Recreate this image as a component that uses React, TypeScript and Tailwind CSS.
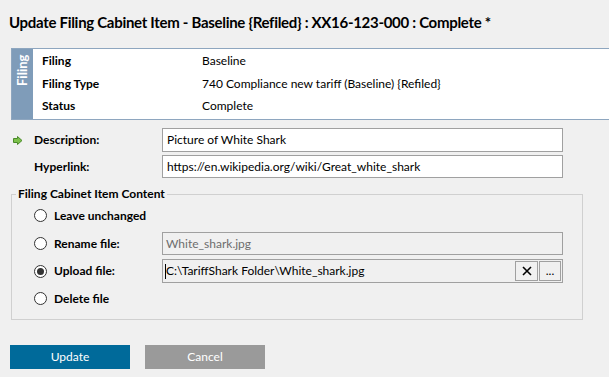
import React from "react";

const font = { fontFamily: 'Lato, "Noto Sans", sans-serif' };

function Radio({ checked }: { checked?: boolean }) {
  return (
    <span className="w-[13px] h-[13px] rounded-full border border-[#333] bg-white flex items-center justify-center shrink-0">
      {checked && <span className="w-[7px] h-[7px] rounded-full bg-[#333]" />}
    </span>
  );
}

function Arrow() {
  return (
    <svg width="10" height="9" viewBox="0 0 10 9">
      <path d="M0.5 2.5 H4.5 V0.5 L9 4.5 L4.5 8.5 V6.5 H0.5 Z" fill="#7cc04a" stroke="#4a8a2a" strokeWidth="1" />
    </svg>
  );
}

export default function App() {
  const info = [
    ["Filing", "Baseline"],
    ["Filing Type", "740 Compliance new tariff (Baseline) {Refiled}"],
    ["Status", "Complete"],
  ];

  const options = [
    { label: "Leave unchanged" },
    { label: "Rename file:", input: "rename" },
    { label: "Upload file:", input: "upload", checked: true },
    { label: "Delete file" },
  ];

  return (
    <div className="w-[609px] h-[377px] bg-[#f0f0f0] text-[12px] text-black overflow-hidden" style={font}>
      {/* TITLE */}
      <h1 className="pl-[9px] pt-[11px] h-[48px] text-[15px] font-bold leading-[22px] tracking-[-0.3px]">
        Update Filing Cabinet Item - Baseline {"{Refiled}"} : XX16-123-000 : Complete *
      </h1>

      {/* FILING PANEL */}
      <div className="ml-[11px] h-[72px] flex border border-r-0 border-[#8ea6bf] bg-white">
        <div className="w-[21px] bg-[#7f9cb9] flex justify-center pt-[6px]">
          <span className="[writing-mode:vertical-rl] rotate-180 text-white font-bold text-[13px] leading-[21px] h-[32px] text-right">
            Filing
          </span>
        </div>
        <div className="flex flex-col pt-[1px]">
          {info.map(([k, v]) => (
            <div key={k} className="flex h-[22.5px] items-center">
              <span className="w-[169px] pl-[9px] font-bold">{k}</span>
              <span>{v}</span>
            </div>
          ))}
        </div>
      </div>

      {/* DESCRIPTION / HYPERLINK */}
      <div className="mt-[8px] flex flex-col gap-[3px]">
        <div className="flex items-center h-[24px]">
          <span className="w-[34px] pl-[13px]">
            <Arrow />
          </span>
          <label className="w-[128px] font-bold">Description:</label>
          <div className="w-[401px] h-[24px] border border-[#a0a0a0] bg-white pl-[4px] flex items-center">
            Picture of White Shark
          </div>
        </div>
        <div className="flex items-center h-[23px]">
          <span className="w-[34px]" />
          <label className="w-[128px] font-bold">Hyperlink:</label>
          <div className="w-[401px] h-[23px] border border-[#a0a0a0] bg-white pl-[4px] flex items-center">
            https://en.wikipedia.org/wiki/Great_white_shark
          </div>
        </div>
      </div>

      {/* CONTENT GROUP */}
      <fieldset className="ml-[11px] mt-[8px] w-[572px] h-[134px] border border-[#d0d0d0]">
        <legend className="ml-[4px] px-[2px] font-bold leading-[16px]">Filing Cabinet Item Content</legend>
        <div className="flex flex-col pl-[22px]">
          {options.map((o) => (
            <div key={o.label} className="flex items-center h-[27.7px]">
              <Radio checked={o.checked} />
              <span className="ml-[7px] w-[108px] font-bold">{o.label}</span>
              {o.input === "rename" && (
                <div className="w-[401px] h-[23px] border border-[#a0a0a0] pl-[3px] flex items-center text-[#6d6d6d]">
                  White_shark.jpg
                </div>
              )}
              {o.input === "upload" && (
                <div className="w-[401px] h-[24px] border border-[#a0a0a0] pl-[2px] flex items-center">
                  <span className="w-px h-[15px] bg-black" />
                  <span className="flex-1">C:\TariffShark Folder\White_shark.jpg</span>
                  <button className="w-[23px] h-[20px] border border-[#a0a0a0] flex items-center justify-center">
                    <svg width="10" height="10" viewBox="0 0 10 10">
                      <path d="M1 1 L9 9 M9 1 L1 9" stroke="#000" strokeWidth="1.6" />
                    </svg>
                  </button>
                  <button className="w-[22px] h-[20px] border border-[#a0a0a0] ml-px mr-[1px] leading-[14px] text-center">
                    ...
                  </button>
                </div>
              )}
            </div>
          ))}
        </div>
      </fieldset>

      {/* ACTIONS */}
      <div className="mt-[25px] ml-[10px] flex gap-[15px]">
        <button className="w-[120px] h-[24px] bg-[#006a9a] text-white">Update</button>
        <button className="w-[120px] h-[24px] bg-[#9a9a9a] text-white">Cancel</button>
      </div>
    </div>
  );
}
